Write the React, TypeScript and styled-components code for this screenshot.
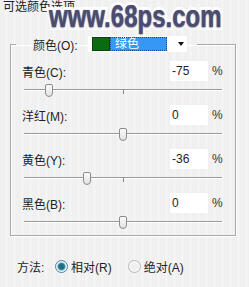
import React from "react";
import styled, { createGlobalStyle } from "styled-components";

const GlobalStyle = createGlobalStyle`
  html, body {
    margin: 0;
    padding: 0;
    background: #f0f0f0;
  }
  * {
    box-sizing: border-box;
  }
`;

const Dialog = styled.div`
  position: relative;
  width: 249px;
  height: 287px;
  overflow: hidden;
  display: flex;
  flex-direction: column;
  font-family: "Liberation Sans", "Noto Sans CJK SC", sans-serif;
  font-size: 12px;
  color: #1e1e1e;
  background-color: #f0f0f0;
  background-image: repeating-linear-gradient(
    90deg,
    rgba(255, 255, 255, 0) 0px,
    rgba(255, 255, 255, 0) 5px,
    rgba(255, 255, 255, 0.45) 6px,
    rgba(255, 255, 255, 0) 8px
  );
`;

const TitleBar = styled.div`
  height: 16px;
  line-height: 14px;
  padding-left: 3px;
  font-size: 12px;
  color: #222;
`;

const Watermark = styled.div`
  position: absolute;
  left: 49px;
  top: 1px;
  font-family: "Liberation Sans", sans-serif;
  font-weight: 700;
  font-size: 32px;
  line-height: 30px;
  white-space: nowrap;
  color: #4c4c72;
  -webkit-text-stroke: 6px #ffffff;
  paint-order: stroke fill;
  text-shadow: 0 0 1px rgba(50, 50, 80, 0.6), 0 1px 2px rgba(50, 50, 80, 0.45);
  transform: scaleX(0.75);
  transform-origin: left top;
  pointer-events: none;
`;

const Group = styled.fieldset`
  margin: 20px 13px 0 10px;
  padding: 9px 12px 5px 11px;
  border: 1px solid #a9a9a9;
  box-shadow: 1px 1px 0 #ffffff, inset 1px 1px 0 #ffffff;
  min-width: 0;
`;

const Legend = styled.legend`
  margin-left: -6px;
  padding: 0 10px 0 17px;
  display: flex;
  align-items: center;
  height: 16px;
`;

const LegendLabel = styled.span`
  width: 55px;
  font-size: 12px;
`;

const Select = styled.div`
  width: 99px;
  height: 16px;
  background: #ffffff;
  display: flex;
  align-items: center;
  padding: 1px 0 1px 4px;
`;

const Swatch = styled.span<{ $color: string }>`
  width: 18px;
  height: 14px;
  background: ${(p) => p.$color};
  border: 1px solid #0b3f0b;
`;

const Selected = styled.span`
  width: 57px;
  height: 14px;
  background: #3797f5;
  color: #ffffff;
  line-height: 14px;
  padding-left: 5px;
  outline: 1px dotted #1c4f8a;
  outline-offset: -1px;
`;

const Arrow = styled.span`
  margin-left: 11px;
  width: 0;
  height: 0;
  border-left: 3.5px solid transparent;
  border-right: 3.5px solid transparent;
  border-top: 4px solid #111;
`;

const Rows = styled.div`
  display: flex;
  flex-direction: column;
  gap: 7px;
`;

const Row = styled.div`
  display: flex;
  flex-direction: column;
  gap: 1px;
`;

const FieldLine = styled.div`
  display: flex;
  align-items: center;
  height: 20px;
`;

const FieldLabel = styled.span`
  flex: 1;
  font-size: 12px;
`;

const ValueBox = styled.div`
  width: 38px;
  height: 20px;
  background: #ffffff;
  line-height: 20px;
  padding-left: 2px;
  font-size: 12px;
`;

const Percent = styled.span`
  margin-left: 4px;
  width: 11px;
  font-size: 12px;
  color: #333;
`;

const SliderArea = styled.div`
  position: relative;
  height: 16px;
  margin-left: 2px;
  width: 198px;
`;

const Track = styled.div`
  position: absolute;
  left: 0;
  right: 0;
  top: 7px;
  height: 2px;
  border-top: 1px solid #9a9a9a;
  border-bottom: 1px solid #ffffff;
`;

const Tick = styled.div`
  position: absolute;
  left: 99px;
  top: 7px;
  width: 1px;
  height: 5px;
  background: #8a8a8a;
`;

const Thumb = styled.div`
  position: absolute;
  top: 2px;
  width: 8px;
  height: 13px;
  margin-left: -4px;
  background: linear-gradient(#fbfbfb, #e2e2e2);
  border: 1px solid #8c8c8c;
  border-radius: 2px 2px 4px 4px;
`;

const MethodRow = styled.div`
  display: flex;
  align-items: center;
  margin-top: 22px;
  padding-left: 17px;
  height: 16px;
  font-size: 12px;
`;

const MethodLabel = styled.span`
  width: 38px;
`;

const RadioItem = styled.label`
  display: flex;
  align-items: center;
  gap: 3px;
  margin-right: 16px;
`;

const RadioDot = styled.span<{ $checked: boolean }>`
  width: 13px;
  height: 13px;
  border-radius: 50%;
  border: 1px solid ${(p) => (p.$checked ? "#4a7fa8" : "#b8b8b8")};
  background: ${(p) =>
    p.$checked
      ? "radial-gradient(circle, #1f6f84 0 2.5px, #4f9ab0 3.5px, #e8eef3 4.5px, #ffffff 6px)"
      : "radial-gradient(circle, #f0f0f0 0 3px, #fafafa 6px)"};
`;

const sliders = [
  { label: "青色(C):", value: -75 },
  { label: "洋红(M):", value: 0 },
  { label: "黄色(Y):", value: -36 },
  { label: "黑色(B):", value: 0 },
];

export default function App() {
  return (
    <>
      <GlobalStyle />
      <Dialog>
        <TitleBar>可选颜色选项</TitleBar>
        <Group>
          <Legend>
            <LegendLabel>颜色(O):</LegendLabel>
            <Select>
              <Swatch $color="#0b6b10" />
              <Selected>绿色</Selected>
              <Arrow />
            </Select>
          </Legend>
          <Rows>
            {sliders.map((s) => (
              <Row key={s.label}>
                <FieldLine>
                  <FieldLabel>{s.label}</FieldLabel>
                  <ValueBox>{s.value}</ValueBox>
                  <Percent>%</Percent>
                </FieldLine>
                <SliderArea>
                  <Track />
                  <Tick />
                  <Thumb style={{ left: 99 + s.value * 0.99 }} />
                </SliderArea>
              </Row>
            ))}
          </Rows>
        </Group>
        <MethodRow>
          <MethodLabel>方法:</MethodLabel>
          <RadioItem>
            <RadioDot $checked />
            相对(R)
          </RadioItem>
          <RadioItem>
            <RadioDot $checked={false} />
            绝对(A)
          </RadioItem>
        </MethodRow>
        <Watermark>www.68ps.com</Watermark>
      </Dialog>
    </>
  );
}
